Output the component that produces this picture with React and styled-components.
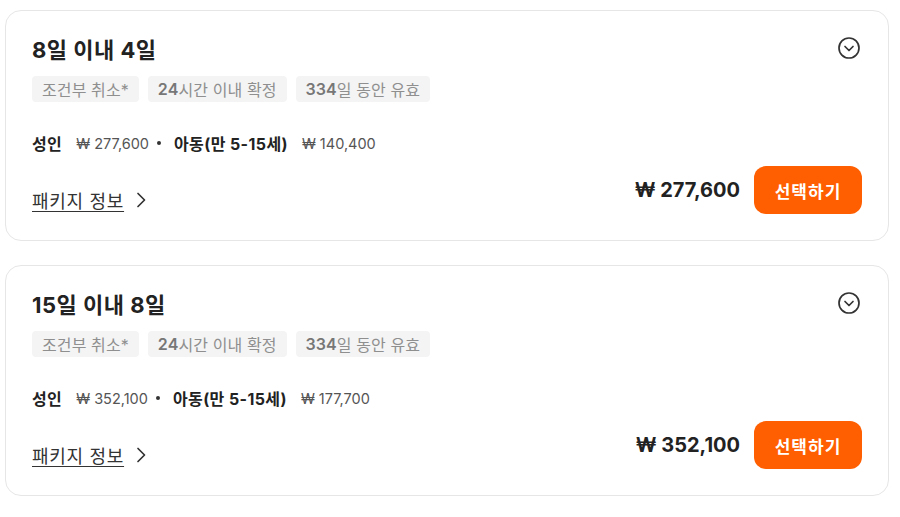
import React from "react";
import styled, { createGlobalStyle } from "styled-components";

const GlobalStyle = createGlobalStyle`
  body {
    margin: 0;
    background: #ffffff;
    font-family: "Inter", "Noto Sans CJK KR", sans-serif;
  }
`;

const Page = styled.div`
  display: flex;
  flex-direction: column;
  gap: 24px;
  padding: 10px 11px 0 5px;
`;

const Card = styled.div`
  border: 1px solid #e6e6e6;
  border-radius: 16px;
  padding: 23px 26px 26px 26px;
  display: flex;
  flex-direction: column;
  background: #fff;
`;

const Header = styled.div`
  display: flex;
  justify-content: space-between;
  align-items: center;
  height: 28px;
`;

const Title = styled.div`
  font-size: 22px;
  font-weight: 700;
  color: #222;
  letter-spacing: 0.5px;
`;

const ToggleIcon = styled.svg`
  width: 24px;
  height: 24px;
  margin-right: 1px;
`;

const Chips = styled.div`
  display: flex;
  gap: 9px;
  margin-top: 14px;
`;

const Chip = styled.div`
  height: 26px;
  padding: 0 10px;
  border-radius: 4px;
  background: #f4f4f4;
  color: #8f8f8f;
  font-size: 16px;
  letter-spacing: 0.1px;
  display: flex;
  align-items: center;
  b {
    font-weight: 600;
    color: #777;
  }
`;

const Prices = styled.div`
  display: flex;
  align-items: center;
  margin-top: 30px;
  height: 22px;
  font-size: 16px;
  color: #222;
`;

const Who = styled.span`
  font-weight: 700;
  letter-spacing: 0.4px;
  margin-right: 14px;
`;

const Amount = styled.span`
  font-size: 14.5px;
  color: #555;
`;

const Dot = styled.span`
  display: inline-block;
  width: 4px;
  height: 4px;
  border-radius: 50%;
  background: #333;
  margin: 0 13px 0 8px;
`;

const Footer = styled.div`
  display: flex;
  justify-content: space-between;
  align-items: flex-end;
  margin-top: 12px;
`;

const InfoLink = styled.a`
  display: flex;
  align-items: center;
  gap: 10px;
  height: 28px;
  font-size: 18px;
  letter-spacing: 0.7px;
  color: #333;
  cursor: pointer;
  span {
    text-decoration: underline;
    text-underline-offset: 3px;
  }
`;

const Buy = styled.div`
  display: flex;
  align-items: center;
  gap: 14px;
`;

const Total = styled.div`
  font-size: 20px;
  font-weight: 700;
  color: #222;
`;

const SelectButton = styled.button`
  width: 108px;
  height: 48px;
  border: none;
  border-radius: 12px;
  background: #ff5f00;
  color: #fff;
  font-family: inherit;
  font-size: 17px;
  letter-spacing: 1px;
  font-weight: 700;
  cursor: pointer;
`;

const won = (n) => "₩ " + n.toLocaleString("en-US");

const packages = [
  { title: "8일 이내 4일", adult: 277600, child: 140400 },
  { title: "15일 이내 8일", adult: 352100, child: 177700 },
];

const App = () => {
  return (
    <Page>
      <GlobalStyle />
      {packages.map((p, i) => (
        <Card key={i}>
          <Header>
            <Title>{p.title}</Title>
            <ToggleIcon viewBox="0 0 24 24" fill="none" stroke="#333" strokeWidth="1.7" strokeLinecap="round" strokeLinejoin="round">
              <circle cx="12" cy="12" r="10" />
              <path d="M8 10.5l4 4 4-4" />
            </ToggleIcon>
          </Header>
          <Chips>
            <Chip>조건부 취소*</Chip>
            <Chip><b>24</b>시간 이내 확정</Chip>
            <Chip><b>334</b>일 동안 유효</Chip>
          </Chips>
          <Prices>
            <Who>성인</Who>
            <Amount>{won(p.adult)}</Amount>
            <Dot />
            <Who>아동(만 5-15세)</Who>
            <Amount>{won(p.child)}</Amount>
          </Prices>
          <Footer>
            <InfoLink>
              <span>패키지 정보</span>
              <svg width="14" height="18" viewBox="0 0 14 18" fill="none" stroke="#333" strokeWidth="1.7" strokeLinecap="round" strokeLinejoin="round">
                <path d="M4 2.5l6.5 6.5-6.5 6.5" />
              </svg>
            </InfoLink>
            <Buy>
              <Total>{won(p.adult)}</Total>
              <SelectButton>선택하기</SelectButton>
            </Buy>
          </Footer>
        </Card>
      ))}
    </Page>
  );
};

export default App;
